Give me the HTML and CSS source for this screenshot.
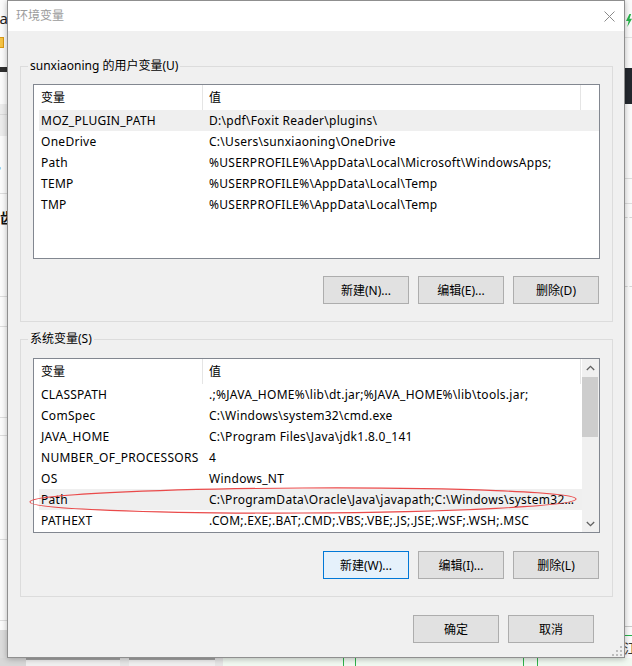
FILE: index.html
```html
<!DOCTYPE html>
<html lang="zh-CN">
<head>
<meta charset="utf-8">
<title>环境变量</title>
<link rel="stylesheet" href="styles.css">
</head>
<body>
<div class="desk">
  <div class="strip strip-left">
    <div class="l1"><span class="l-text">ia</span></div>
    <div class="l2"><span class="l-yellow"></span></div>
    <div class="l3"></div>
    <div class="l4"></div>
    <div class="l5"></div>
    <div class="l6"><span class="l-band-line"></span></div>
    <div class="l7"><span class="l-small">。</span></div>
    <div class="l8"><span class="l-bold">齿</span></div>
    <div class="l9"></div>
    <div class="l10"></div>
    <div class="l11"></div>
    <div class="l12"></div>
    <div class="l13"></div>
    <div class="l14"></div>
    <div class="l15"></div>
  </div>

  <div class="dialog">
    <div class="titlebar">
      <span class="title">环境变量</span>
      <span class="close">
        <svg width="11" height="11" viewBox="0 0 11 11"><path d="M0.5 0.5 L10.5 10.5 M10.5 0.5 L0.5 10.5" stroke="#8a8a8a" stroke-width="1" fill="none"/></svg>
      </span>
    </div>
    <div class="body">
      <fieldset class="group">
        <legend>sunxiaoning 的用户变量(U)</legend>
        <div class="list">
          <div class="list-main">
            <div class="head"><div class="hcell">变量</div><div class="hcell">值</div></div>
            <div class="row sel"><div>MOZ_PLUGIN_PATH</div><div>D:\pdf\Foxit Reader\plugins\</div></div>
            <div class="row"><div>OneDrive</div><div>C:\Users\sunxiaoning\OneDrive</div></div>
            <div class="row"><div>Path</div><div>%USERPROFILE%\AppData\Local\Microsoft\WindowsApps;</div></div>
            <div class="row"><div>TEMP</div><div>%USERPROFILE%\AppData\Local\Temp</div></div>
            <div class="row"><div>TMP</div><div>%USERPROFILE%\AppData\Local\Temp</div></div>
          </div>
        </div>
        <div class="btns">
          <button class="btn">新建(N)...</button>
          <button class="btn">编辑(E)...</button>
          <button class="btn">删除(D)</button>
        </div>
      </fieldset>

      <fieldset class="group group-sys">
        <legend>系统变量(S)</legend>
        <div class="list">
          <div class="list-main">
            <div class="head"><div class="hcell">变量</div><div class="hcell">值</div></div>
            <div class="row"><div>CLASSPATH</div><div>.;%JAVA_HOME%\lib\dt.jar;%JAVA_HOME%\lib\tools.jar;</div></div>
            <div class="row"><div>ComSpec</div><div>C:\Windows\system32\cmd.exe</div></div>
            <div class="row"><div>JAVA_HOME</div><div>C:\Program Files\Java\jdk1.8.0_141</div></div>
            <div class="row"><div>NUMBER_OF_PROCESSORS</div><div>4</div></div>
            <div class="row"><div>OS</div><div>Windows_NT</div></div>
            <div class="row sel"><div>Path</div><div>C:\ProgramData\Oracle\Java\javapath;C:\Windows\system32;C:\Windows;C:\Windows\System32\Wbem</div></div>
            <div class="row"><div>PATHEXT</div><div>.COM;.EXE;.BAT;.CMD;.VBS;.VBE;.JS;.JSE;.WSF;.WSH;.MSC</div></div>
          </div>
          <div class="scrollbar">
            <div class="sb-arrow">
              <svg width="9" height="6" viewBox="0 0 9 6"><path d="M0.8 5 L4.5 1.3 L8.2 5" stroke="#606060" stroke-width="1.3" fill="none"/></svg>
            </div>
            <div class="sb-thumb"></div>
            <div class="sb-track"></div>
            <div class="sb-arrow">
              <svg width="9" height="6" viewBox="0 0 9 6"><path d="M0.8 1 L4.5 4.7 L8.2 1" stroke="#606060" stroke-width="1.3" fill="none"/></svg>
            </div>
          </div>
          <svg class="mark" width="552" height="30" viewBox="0 0 552 30">
            <ellipse cx="274" cy="14.5" rx="273" ry="12.5" fill="none" stroke="#ea4a4a" stroke-width="1.1" transform="rotate(-0.3 274 14.5)"/>
          </svg>
        </div>
        <div class="btns">
          <button class="btn btn-focus">新建(W)...</button>
          <button class="btn">编辑(I)...</button>
          <button class="btn">删除(L)</button>
        </div>
      </fieldset>

      <div class="footer">
        <button class="btn">确定</button>
        <button class="btn">取消</button>
      </div>
    </div>
    <svg class="grip" width="10" height="10" viewBox="0 0 10 10">
      <rect x="8" y="0" width="2" height="2" fill="#bdbdbd"/>
      <rect x="4" y="4" width="2" height="2" fill="#bdbdbd"/>
      <rect x="8" y="4" width="2" height="2" fill="#bdbdbd"/>
      <rect x="0" y="8" width="2" height="2" fill="#bdbdbd"/>
      <rect x="4" y="8" width="2" height="2" fill="#bdbdbd"/>
      <rect x="8" y="8" width="2" height="2" fill="#bdbdbd"/>
    </svg>
  </div>

  <div class="strip strip-right">
    <div class="r1">
      <svg class="bolt" width="7" height="15" viewBox="0 0 7 15"><path d="M4 0 L0 8 L3 8 L1.5 15 L7 5.5 L4 5.5 L6 0 Z" fill="#27b34a"/></svg>
    </div>
    <div class="r2"></div>
    <div class="r3"></div>
    <div class="r4"></div>
    <div class="r5"></div>
    <div class="r6"></div>
    <div class="r7"></div>
    <div class="r8"></div>
    <div class="r9"></div>
    <div class="r10"><span class="r-glyph">江</span></div>
  </div>

  <div class="strip-bottom">
    <div class="b1"></div>
    <div class="b2"></div>
    <div class="b3"></div>
    <div class="b4"></div>
    <div class="b5"></div>
    <div class="b6">
      <span class="gl gl1"></span>
      <span class="gl gl2"></span>
      <span class="gl gl3"></span>
      <span class="gl gl4"></span>
    </div>
  </div>
</div>
</body>
</html>
```

FILE: styles.css
```css
html, body {
  margin: 0;
  padding: 0;
}
body {
  background: #ffffff;
  font-family: "Noto Sans", "Noto Sans CJK SC", sans-serif;
  font-size: 12px;
  color: #000;
}
.desk {
  display: grid;
  grid-template-columns: 7px 618px 7px;
  grid-template-rows: 658px 8px;
  width: 632px;
  height: 666px;
  overflow: hidden;
}

/* ---------- background strips ---------- */
.strip {
  display: flex;
  flex-direction: column;
  overflow: hidden;
  background: #fbfbfb;
}
.strip-left { grid-column: 1; grid-row: 1; }
.strip-right { grid-column: 3; grid-row: 1; }

.l1 { height: 36px; display: flex; justify-content: flex-end; align-items: center; overflow: hidden; }
.l-text { font-size: 15px; color: #222; line-height: 15px; margin-right: -1px; white-space: nowrap; }
.l2 { height: 12px; display: flex; align-items: flex-end; }
.l-yellow { display: block; width: 3px; height: 9px; background: #f6c343; border: 1px solid #d99a17; border-left: 0; }
.l3 { height: 19px; }
.l4 { height: 5px; background: #2f2f2f; }
.l5 { height: 32px; }
.l6 { height: 32px; background: #ececec; position: relative; }
.l-band-line { display: block; height: 10px; border-bottom: 1px solid #dadada; }
.l7 { height: 57px; border-bottom: 1px solid #dddddd; display: flex; align-items: center; justify-content: flex-end; overflow: hidden; }
.l-small { font-size: 10px; color: #2a7fb8; line-height: 10px; }
.l8 { height: 102px; border-bottom: 1px solid #dddddd; overflow: hidden; display: flex; justify-content: flex-end; }
.l-bold { font-size: 14px; font-weight: bold; line-height: 14px; margin-top: 17px; margin-right: -7px; color: #111; }
.l9 { height: 29px; border-bottom: 1px solid #dddddd; }
.l10 { height: 90px; border-bottom: 1px solid #dddddd; }
.l11 { height: 17px; border-bottom: 1px solid #dddddd; }
.l12 { height: 103px; border-bottom: 1px solid #dddddd; }
.l13 { height: 80px; border-bottom: 1px solid #dddddd; }
.l14 { height: 9px; }
.l15 { flex: 1; background: #dcdcdc; }

.r1 { height: 37px; border-bottom: 1px solid #e2e2e2; display: flex; align-items: flex-start; }
.bolt { margin-top: 13px; margin-left: 1px; }
.r2 { height: 30px; }
.r3 { height: 36px; background: #24282e; }
.r4 { height: 74px; border-bottom: 1px solid #dedede; }
.r5 { height: 24px; border-bottom: 1px solid #dedede; }
.r6 { height: 13px; border-bottom: 1px dashed #d6d6d6; }
.r7 { height: 68px; border-bottom: 1px dashed #d6d6d6; }
.r8 { height: 339px; border-bottom: 1px solid #c9c9c9; }
.r9 { height: 8px; border-bottom: 1px solid #27b34a; }
.r10 { flex: 1; overflow: hidden; display: flex; }
.r-glyph { font-size: 13px; line-height: 13px; margin-top: 6px; margin-left: -1px; color: #333; }

.strip-bottom {
  grid-column: 1 / span 3;
  grid-row: 2;
  display: flex;
  background: #f3f3f3;
}
.b1 { width: 26px; background: #d8d8d8; }
.b2 { width: 94px; border-top: 2px solid #a3a3a3; background: #f0f0f0; }
.b3 { width: 9px; background: #e6e6e6; }
.b4 { width: 86px; border-top: 2px solid #a3a3a3; background: #f0f0f0; }
.b5 { width: 8px; background: #e6e6e6; }
.b6 { flex: 1; background: #f1f9f1; display: flex; }
.gl { display: block; width: 1px; background: #2fb34a; }
.gl1 { margin-left: 120px; }
.gl2 { margin-left: 11px; }
.gl3 { margin-left: 167px; }
.gl4 { margin-left: 13px; }

/* ---------- dialog ---------- */
.dialog {
  grid-column: 2;
  grid-row: 1;
  position: relative;
  z-index: 1;
  display: flex;
  flex-direction: column;
  border: 1px solid #8f8f8f;
  background: #f0f0f0;
  box-shadow: 0 1px 6px rgba(0, 0, 0, 0.28);
}
.titlebar {
  height: 30px;
  background: #ffffff;
  display: flex;
  align-items: center;
  padding-left: 8px;
}
.title {
  color: #9b9b9b;
  font-size: 12px;
  line-height: 16px;
}
.close {
  margin-left: auto;
  margin-right: 9px;
  display: flex;
}
.body {
  flex: 1;
  padding: 27px 11px 0 12px;
  display: flex;
  flex-direction: column;
}

.group {
  margin: 0;
  padding: 0 12px 17px 12px;
  border: 1px solid #dcdcdc;
  min-width: 0;
}
.group legend {
  padding: 0 2px;
  margin-left: -5px;
  line-height: 16px;
  color: #000;
}
.group-sys {
  margin-top: 9px;
}

.list {
  margin-top: 10px;
  height: 175px;
  box-sizing: border-box;
  border: 1px solid #828790;
  background: #ffffff;
  display: flex;
  position: relative;
}
.group-sys .list {
  margin-top: 11px;
}
.list-main {
  flex: 1;
  overflow: hidden;
}
.head {
  display: grid;
  grid-template-columns: 169px 378px;
  height: 25px;
}
.hcell {
  border-right: 1px solid #e5e5e5;
  padding-left: 7px;
  line-height: 25px;
}
.hcell + .hcell {
  padding-left: 6px;
}
.row {
  display: grid;
  grid-template-columns: 163px 378px;
  margin-left: 5px;
  height: 21px;
  line-height: 21px;
  letter-spacing: 0.28px;
}
.row > div {
  padding-left: 2px;
  padding-right: 0;
  white-space: nowrap;
  overflow: hidden;
  text-overflow: ellipsis;
}
.row > div + div {
  padding-left: 7px;
  padding-right: 4px;
}
.row.sel {
  background: #efefef;
}

.scrollbar {
  width: 17px;
  background: #f0f0f0;
  display: flex;
  flex-direction: column;
}
.sb-arrow {
  height: 17px;
  display: flex;
  align-items: center;
  justify-content: center;
}
.sb-thumb {
  height: 60px;
  margin: 1px 1px 0 0;
  background: #cdcdcd;
}
.sb-track {
  flex: 1;
}
.mark {
  position: absolute;
  left: -5px;
  top: 127px;
  overflow: visible;
  pointer-events: none;
}

.btns {
  display: flex;
  justify-content: flex-end;
  gap: 9px;
  margin-top: 17px;
  padding-right: 1px;
}
.group-sys .btns {
  margin-top: 18px;
}
.btn {
  width: 86px;
  height: 28px;
  box-sizing: border-box;
  margin: 0;
  padding: 0;
  border: 1px solid #adadad;
  background: #e1e1e1;
  font-family: "Noto Sans", "Noto Sans CJK SC", sans-serif;
  font-size: 12px;
  color: #000;
  display: flex;
  align-items: center;
  justify-content: center;
}
.btn-focus {
  background: #e5f1fb;
  border-color: #0078d7;
}
.footer {
  display: flex;
  justify-content: flex-end;
  gap: 9px;
  margin-top: 18px;
  padding-right: 19px;
}
.grip {
  position: absolute;
  right: 2px;
  bottom: 1px;
}
```
